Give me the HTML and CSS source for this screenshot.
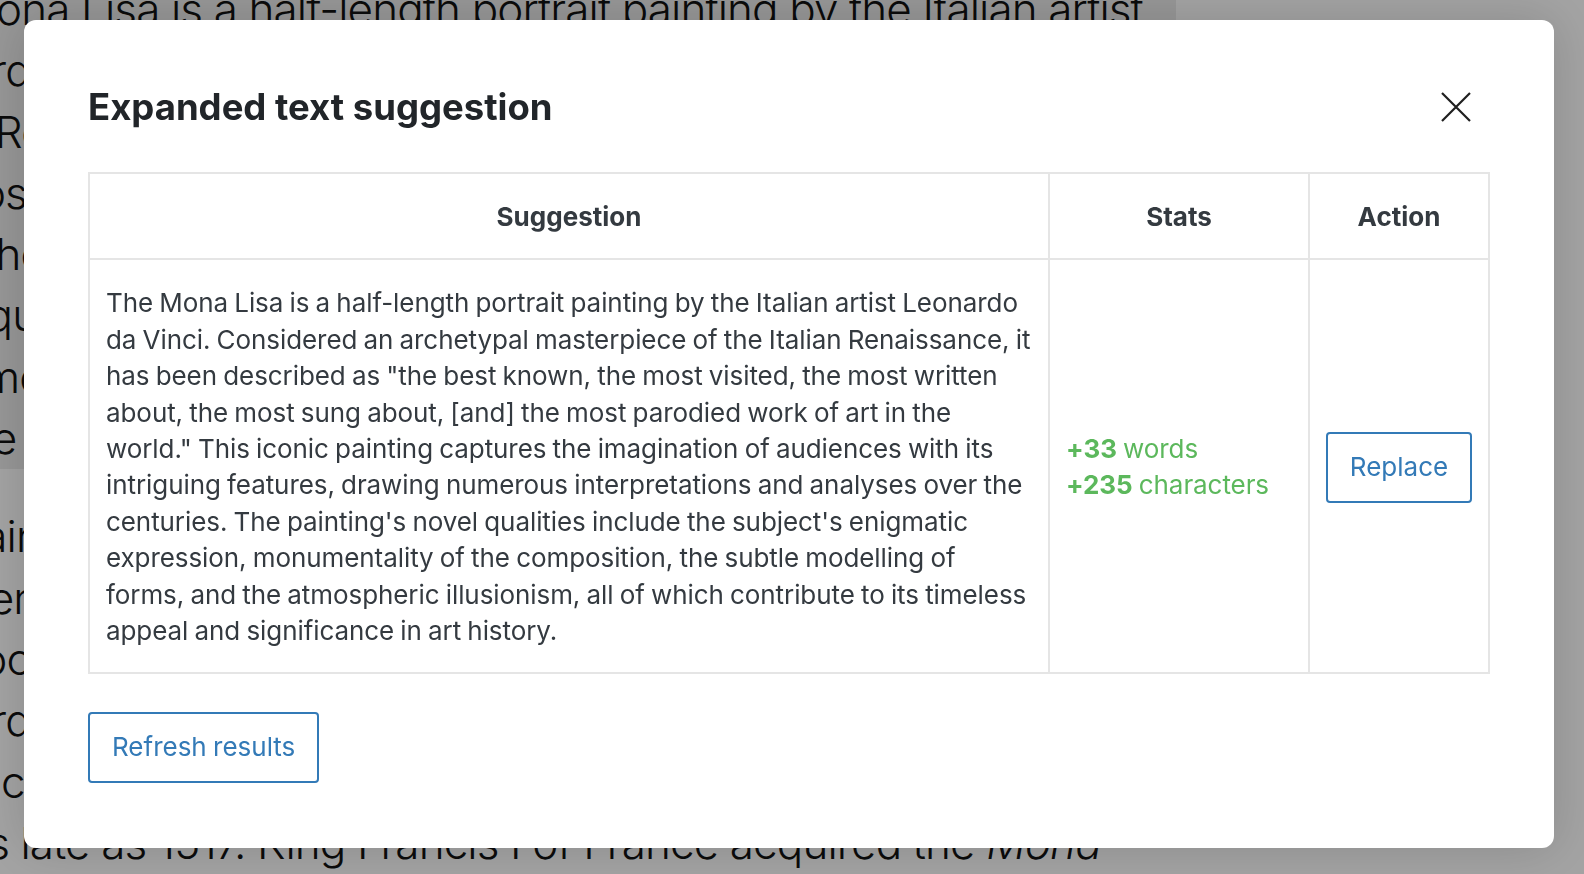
FILE: index.html
```html
<!DOCTYPE html>
<html lang="en">
<head>
<meta charset="utf-8">
<title>Expanded text suggestion</title>
<link rel="stylesheet" href="styles.css">
</head>
<body>
<div class="page">
  <p class="para"><span class="hl">The Mona Lisa is a half-length portrait painting by the Italian artist<br>Leonardo da Vinci. Considered an archetypal masterpiece of the<br>Italian Renaissance, it has been described as "the best known,<br>the most visited, the most written about, the most sung about,<br>[and] the most parodied work of art in the world." The painting's<br>novel qualities include the subject's enigmatic expression,<br>monumentality of the composition, the subtle modelling of forms,<br>and the atmospheric illusionism.</span></p>
  <p class="para">The painting has been traditionally considered to depict the Italian<br>in Florence, Lisa Gherardini, the wife of Francesco<br>del Giocondo. It is painted in oil on a white Lombardy poplar<br>Leonardo never gave the painting to the Giocondo family, and<br>evidence suggests he kept refining the portrait and worked<br>on it as late as 1517. King Francis I of France acquired the <em>Mona</em><br><em>Lisa</em> after Leonardo's death in 1519, and it is now the property of the French Republic.</p>
</div>

<div class="overlay">
  <div class="modal" role="dialog" aria-labelledby="modal-title">
    <div class="modal-header">
      <h2 class="modal-title" id="modal-title">Expanded text suggestion</h2>
      <button class="close-btn" aria-label="Close">
        <svg viewBox="0 0 30 30" width="30" height="30"><path d="M1 1 L29 29 M29 1 L1 29" stroke="#1f1f1f" stroke-width="2.2" fill="none"/></svg>
      </button>
    </div>

    <table class="suggest-table">
      <colgroup>
        <col class="col-suggestion">
        <col class="col-stats">
        <col class="col-action">
      </colgroup>
      <thead>
        <tr><th>Suggestion</th><th>Stats</th><th>Action</th></tr>
      </thead>
      <tbody>
        <tr>
          <td class="text-cell">The Mona Lisa is a half-length portrait painting by the Italian artist Leonardo da Vinci. Considered an archetypal masterpiece of the Italian Renaissance, it has been described as "the best known, the most visited, the most written about, the most sung about, [and] the most parodied work of art in the world." This iconic painting captures the imagination of audiences with its intriguing features, drawing numerous interpretations and analyses over the centuries. The painting's novel qualities include the subject's enigmatic expression, monumentality of the composition, the subtle modelling of forms, and the atmospheric illusionism, all of which contribute to its timeless appeal and significance in art history.</td>
          <td class="stats-cell">
            <div class="stat"><strong>+33</strong> words</div>
            <div class="stat"><strong>+235</strong> characters</div>
          </td>
          <td class="action-cell"><button class="btn-outline btn-block">Replace</button></td>
        </tr>
      </tbody>
    </table>

    <div class="modal-footer">
      <button class="btn-outline">Refresh results</button>
    </div>
  </div>
</div>
</body>
</html>
```

FILE: styles.css
```css
html, body {
  margin: 0;
  padding: 0;
  background: #ffffff;
  height: 100%;
  overflow: hidden;
}

/* underlying page */
.page {
  width: 1600px;
  margin: -21px 0 0 -131px;
  font-family: "Inter", "Liberation Sans", sans-serif;
  font-weight: 300;
  font-size: 44px;
  line-height: 61.3px;
  letter-spacing: -0.02em;
  color: #111;
  white-space: nowrap;
}
.para {
  margin: 0 0 37px 0;
}
.hl {
  background: #ececec;
  padding: 4px 33px 4px 0;
  -webkit-box-decoration-break: clone;
  box-decoration-break: clone;
}

/* overlay + modal */
.overlay {
  position: fixed;
  inset: 0;
  background: rgba(0, 0, 0, 0.36);
  display: flex;
  align-items: flex-start;
  padding: 20px 32px 0 24px;
}

.modal {
  flex: 1;
  background: #ffffff;
  border-radius: 12px;
  padding: 64px 64px 65px;
  box-shadow: 0 0 50px rgba(0, 0, 0, 0.16);
  font-family: "Inter", "Liberation Sans", sans-serif;
  color: #343a40;
}

.modal-header {
  display: flex;
  align-items: center;
  justify-content: space-between;
  margin-bottom: 42px;
}
.modal-title {
  margin: 0;
  font-size: 36.5px;
  line-height: 46px;
  font-weight: 700;
  color: #212529;
}
.close-btn {
  width: 32px;
  height: 32px;
  margin-right: 18px;
  padding: 0;
  border: 0;
  background: transparent;
  display: flex;
  align-items: center;
  justify-content: center;
  cursor: pointer;
}

.suggest-table {
  width: 1400px;
  table-layout: fixed;
  border-collapse: collapse;
  font-size: 26px;
  line-height: 36.4px;
  word-spacing: -1px;
  letter-spacing: -0.003em;
}
.col-suggestion { width: 960px; }
.col-stats { width: 260px; }
.col-action { width: 180px; }

.suggest-table th,
.suggest-table td {
  border: 2px solid #e5e5e5;
  padding: 25px 16px 23px;
}
.suggest-table th {
  font-weight: 700;
  text-align: center;
  color: #343a40;
  letter-spacing: 0;
}
.text-cell {
  color: #343a40;
  vertical-align: top;
}
.stats-cell {
  vertical-align: middle;
  color: #5cb85c;
}
.stat strong {
  font-weight: 700;
}
.action-cell {
  vertical-align: middle;
}

.btn-outline {
  font-family: "Inter", "Liberation Sans", sans-serif;
  font-size: 26px;
  line-height: 36.4px;
  word-spacing: -1px;
  color: #337ab7;
  background: #ffffff;
  border: 2px solid #337ab7;
  border-radius: 4px;
  padding: 15px 22px;
  cursor: pointer;
}
.btn-block {
  display: block;
  width: 100%;
  padding-left: 0;
  padding-right: 0;
}

.modal-footer {
  margin-top: 38px;
  display: flex;
}
```
